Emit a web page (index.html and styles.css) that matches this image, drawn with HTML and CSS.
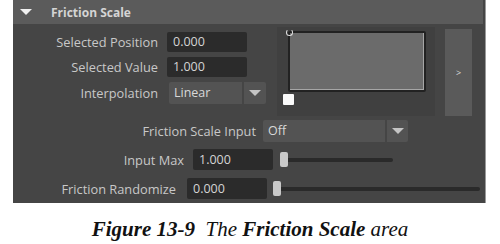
FILE: index.html
```html
<!DOCTYPE html>
<html lang="en">
<head>
    <meta charset="UTF-8">
    <title>Friction Scale</title>
    <link rel="stylesheet" href="styles.css">
</head>
<body>
    <div class="panel">
        <div class="header">
            <span class="caret"></span>
            <span class="title">Friction Scale</span>
        </div>

        <div class="top">
            <div class="fields">
                <label class="lbl">Selected Position</label>
                <div class="field">0.000</div>
                <label class="lbl">Selected Value</label>
                <div class="field">1.000</div>
                <label class="lbl">Interpolation</label>
                <div class="dropdown small">
                    <span class="dd-main">Linear</span>
                    <span class="dd-arrow"><span class="tri"></span></span>
                </div>
            </div>

            <div class="ramp">
                <div class="ramp-box">
                    <span class="handle"></span>
                </div>
                <span class="ramp-key"></span>
            </div>

            <div class="expand">&gt;</div>
        </div>

        <div class="row row-input">
            <label class="lbl">Friction Scale Input</label>
            <div class="dropdown wide">
                <span class="dd-main">Off</span>
                <span class="dd-arrow"><span class="tri"></span></span>
            </div>
        </div>

        <div class="row row-max">
            <label class="lbl">Input Max</label>
            <div class="field">1.000</div>
            <div class="slider short"><span class="knob"></span></div>
        </div>

        <div class="row row-rand">
            <label class="lbl">Friction Randomize</label>
            <div class="field">0.000</div>
            <div class="slider long"><span class="knob"></span></div>
        </div>
    </div>

    <p class="caption"><b>Figure 13-9</b>&nbsp; The <b>Friction Scale</b> area</p>
</body>
</html>
```

FILE: styles.css
```css
body { margin: 0; background: #fff; font-family: "Open Sans", "Liberation Sans", sans-serif; }

.panel { margin-left: 13px; width: 473px; height: 203px; background: #454545; border-right: 1px solid #9a9a9a; box-sizing: border-box; }

.header { height: 24px; margin-right: 2px; background: #5b5b5b; display: flex; align-items: center; }
.caret { width: 0; height: 0; margin-left: 7px; border-left: 6px solid transparent; border-right: 6px solid transparent; border-top: 6px solid #f0f0f0; }
.title { margin-left: 19px; font-size: 12px; font-weight: bold; color: #d4d4d4; }

.lbl { font-size: 12.8px; color: #c8c8c8; text-align: right; white-space: nowrap; }

.field { width: 80px; height: 21px; box-sizing: border-box; padding-left: 6px; background: #2b2b2b; border-radius: 2px; color: #d4d4d4; font-size: 12.5px; line-height: 21px; }

.top { display: flex; height: 92px; }
.fields { width: 264px; display: grid; grid-template-columns: 145px 97px; column-gap: 9px; row-gap: 5px; align-content: start; align-items: center; padding-top: 8px; box-sizing: border-box; }
.fields .field { height: 20px; line-height: 20px; }

.dropdown { display: flex; gap: 2px; height: 22px; font-size: 12.5px; color: #d8d8d8; }
.dd-main { background: #535353; border-radius: 2px 0 0 2px; padding-left: 5px; line-height: 22px; box-sizing: border-box; }
.dd-arrow { background: #535353; border-radius: 0 2px 2px 0; display: flex; align-items: center; justify-content: center; }
.tri { width: 0; height: 0; border-left: 6px solid transparent; border-right: 6px solid transparent; border-top: 6px solid #c4c4c4; }
.dropdown.small { margin-left: 2px; width: 97px; }
.dropdown.small .dd-main { width: 73px; }
.dropdown.small .dd-arrow { width: 22px; }
.dropdown.wide { width: 145px; }
.dropdown.wide .dd-main { width: 122px; }
.dropdown.wide .dd-arrow { width: 21px; }

.ramp { width: 158px; height: 89px; margin-top: 3px; background: #404040; position: relative; }
.ramp-box { position: absolute; left: 11px; top: 4px; width: 138px; height: 61px; box-sizing: border-box; border: 2px solid #222; border-radius: 2px; background: #6b6b6b; box-shadow: inset -1px -1px 0 #a6a6a6; }
.handle { position: absolute; left: -4px; top: -4px; width: 5px; height: 5px; border: 1px solid #e0e0e0; border-top-color: transparent; border-radius: 50%; }
.ramp-key { position: absolute; left: 6px; top: 67px; width: 11px; height: 11px; background: #fafafa; border-radius: 1px; }

.expand { width: 27px; height: 87px; margin-top: 5px; margin-left: 10px; background: #5a5a5a; color: #dcdcdc; font-size: 9px; display: flex; align-items: center; justify-content: center; }

.row { display: flex; align-items: center; height: 22px; }
.row-input { margin-top: 4px; }
.row-input .lbl { width: 243px; }
.row-input .dropdown { margin-left: 7px; }
.row-max { margin-top: 7px; height: 21px; }
.row-max .lbl { width: 171px; }
.row-max .field { margin-left: 9px; }
.row-rand { margin-top: 8px; height: 21px; }
.row-rand .lbl { width: 163px; }
.row-rand .field { margin-left: 11px; }

.slider { position: relative; height: 4px; background: #2a2a2a; border-radius: 2px; }
.slider.short { margin-left: 7px; width: 113px; }
.slider.long { margin-left: 6px; width: 207px; }
.knob { position: absolute; left: 0; top: -6px; width: 8px; height: 15px; background: #c9c9c9; border-radius: 2px; }

.caption { margin: 14px 0 0; text-align: center; font-family: "Liberation Serif", serif; font-style: italic; font-size: 21px; color: #111; }
```
